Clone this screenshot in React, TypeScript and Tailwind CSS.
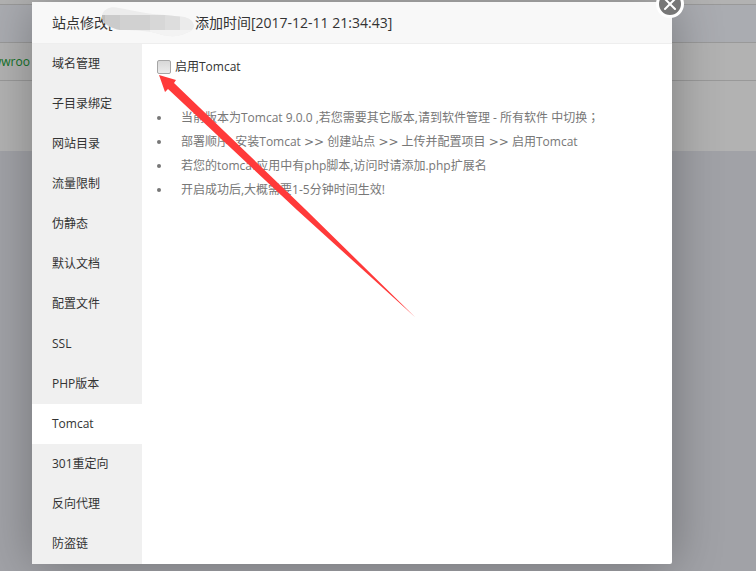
import { X } from 'lucide-react';

const menuItems = [
  '域名管理',
  '子目录绑定',
  '网站目录',
  '流量限制',
  '伪静态',
  '默认文档',
  '配置文件',
  'SSL',
  'PHP版本',
  'Tomcat',
  '301重定向',
  '反向代理',
  '防盗链',
];

const tips = [
  '当前版本为Tomcat 9.0.0 ,若您需要其它版本,请到软件管理 - 所有软件 中切换；',
  '部署顺序: 安装Tomcat >> 创建站点 >> 上传并配置项目 >> 启用Tomcat',
  '若您的tomcat应用中有php脚本,访问时请添加.php扩展名',
  '开启成功后,大概需要1-5分钟时间生效!',
];

/* Site list that sits under the dialog */
const SiteList = () => (
  <div className="min-h-screen bg-[#e7e9ef]">
    <div className="h-[151px] bg-white pt-1 text-xs">
      <div className="h-[38px] border-t border-[#dcdcdc] bg-[#f4f7fe]" />
      <div className="flex h-[39px] items-center border-y border-[#dcdcdc]">
        <a href="#site" className="-ml-2 text-[#20a53a]">
          wwroo
        </a>
      </div>
    </div>
  </div>
);

/* Brush strokes hiding the site name in the title */
const NameMask = () => (
  <svg className="absolute top-1 left-[68px] h-8 w-24" viewBox="0 0 96 32" aria-hidden="true">
    <defs>
      <clipPath id="brush">
        <path d="M2 9C4 2 12 0 19 2C35 5 48 8 65 9L84 11C96 14 97 24 86 27C79 31 68 31 59 28C50 25 38 24 20 24C10 22 1 17 2 9Z" />
      </clipPath>
    </defs>
    <g clipPath="url(#brush)">
      <rect width="96" height="32" fill="#ececec" />
      <rect x="50" y="24" width="46" height="8" fill="#f3f3f3" />
      <rect x="2" y="9" width="3" height="15" fill="#bdbdbd" />
      <rect x="5" y="9" width="15" height="15" fill="#cbcbcb" />
      <rect x="20" y="9" width="30" height="15" fill="#d1d1d1" />
      <rect x="50" y="9" width="15" height="15" fill="#d7d7d7" />
      <rect x="65" y="9" width="15" height="15" fill="#dddddd" />
      <rect x="80" y="9" width="16" height="15" fill="#ebebeb" />
    </g>
  </svg>
);

/* Red pointer aimed at the checkbox */
const Pointer = () => (
  <svg
    className="pointer-events-none absolute top-[72px] left-[126px] h-[246px] w-[260px]"
    viewBox="0 0 260 246"
    aria-hidden="true"
  >
    <path d="M1 1L18 6L16 9L147 135L257.500 243.500L139 136L10 15L7 18Z" fill="#ff3a3a" />
  </svg>
);

/* Arrows and the closing semicolon use wider glyphs than the body font */
const TipText = ({ text }: { text: string }) => (
  <span>
    {text.split(/(>>|；)/).map((part, i) => {
      if (part === '>>') return <span key={i} className="font-['DejaVu_Sans',sans-serif] leading-none">{part}</span>;
      if (part === '；') return <span key={i} className="font-['Noto_Sans_CJK_TC',sans-serif] leading-none">{part}</span>;
      return part;
    })}
  </span>
);

const SiteDialog = () => (
  <div
    role="dialog"
    aria-labelledby="dialog-title"
    className="relative mt-[2px] mr-[84px] ml-8 rounded-xs bg-white shadow-[1px_1px_50px_rgba(0,0,0,0.3)]"
  >
    <header className="relative flex h-[42px] items-center border-b border-[#eee] bg-[#f8f8f8] px-5">
      <h1 id="dialog-title" className="flex text-sm whitespace-nowrap text-[#333]">
        <span className="w-[143px] shrink-0">站点修改[</span>
        <span>添加时间[2017-12-11 21:34:43]</span>
      </h1>
      <NameMask />
    </header>
    <button
      type="button"
      aria-label="关闭"
      className="absolute -top-3 -right-3 flex size-7 items-center justify-center rounded-full border-[3px] border-white bg-[#777] text-white"
    >
      <X className="size-5 shrink-0" strokeWidth={2.4} />
    </button>

    <div className="flex">
      <nav className="w-[110px] shrink-0 bg-[#f0f0f0]">
        {menuItems.map((item) => (
          <a
            key={item}
            href="#tab"
            className={`flex h-10 items-center px-5 text-xs text-[#333] ${item === 'Tomcat' ? 'bg-white' : ''}`}
          >
            {item}
          </a>
        ))}
      </nav>

      <main className="min-w-0 grow px-[15px] pt-[15px]">
        <div className="flex h-4 items-center gap-1">
          <input
            id="enable-tomcat"
            type="checkbox"
            className="size-[14px] appearance-none rounded-xs border border-[#a6a6a6] bg-linear-to-b from-[#d8d8d8] to-[#ececec]"
          />
          <label htmlFor="enable-tomcat" className="text-xs text-[#333]">
            启用Tomcat
          </label>
        </div>
        <ul className="mt-[31px] text-xs leading-6 text-[#777]">
          {tips.map((tip) => (
            <li key={tip} className="flex h-6 items-center gap-5 whitespace-nowrap">
              <span className="size-1 shrink-0 rounded-full bg-[#777]" />
              <TipText text={tip} />
            </li>
          ))}
        </ul>
      </main>
    </div>
    <Pointer />
  </div>
);

export default function App() {
  return (
    <div className="relative min-h-screen overflow-hidden font-['Open_Sans','Noto_Sans_CJK_SC',sans-serif]">
      <SiteList />
      <div className="absolute inset-0 overflow-hidden bg-black/30">
        <SiteDialog />
      </div>
    </div>
  );
}
